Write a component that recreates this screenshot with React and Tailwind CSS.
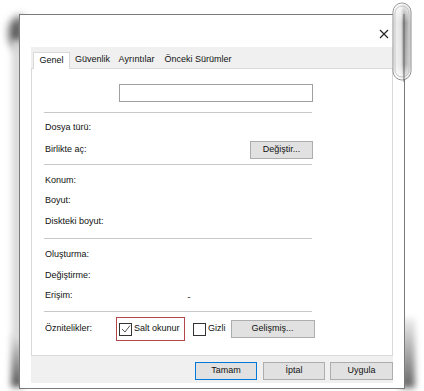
import React from "react";

function Btn({ w, children, primary }) {
  return (
    <div
      className={`h-[18px] flex items-center justify-center bg-[#e1e1e1] border ${
        primary ? "border-[#0078d7]" : "border-[#adadad]"
      }`}
      style={{ width: w }}
    >
      {children}
    </div>
  );
}

function Row({ label, children, h = "h-[20px]", mt = "" }) {
  return (
    <div className={`${h} ${mt} flex items-center pl-[13px] w-[281px]`}>
      <span>{label}</span>
      {children}
    </div>
  );
}

function Sep({ mt }) {
  return <div className={`${mt} ml-[12px] w-[268px] h-px bg-[#c8c8c8]`} />;
}

export default function App() {
  return (
    <div className="relative w-[424px] h-[391px] bg-white overflow-hidden font-['Liberation_Sans',Arial,sans-serif] text-[9px] text-[#111]">
      {/* decorative shadows */}
      <div className="absolute left-[9px] top-[16px] w-[14px] h-[34px] bg-[#555] blur-[4px] rounded-l-full" />
      <div className="absolute left-[12px] top-[40px] w-[10px] h-[300px] bg-[#d8d8d8] blur-[3px]" />
      <div className="absolute left-[11px] top-[335px] w-[12px] h-[52px] bg-gradient-to-b from-[#e0e0e0] to-[#555] blur-[3px]" />
      <div className="absolute left-[400px] top-[318px] w-[15px] h-[70px] bg-gradient-to-b from-[#eeeeee] to-[#666] blur-[3px]" />

      <div className="relative ml-[19px] mt-[14px] w-[386px] h-[375px] border border-[#7a7a7a] bg-white flex flex-col">
        {/* title bar */}
        <div className="h-[32px] flex justify-end items-start pt-[14px] pr-[15px]">
          <svg width="10" height="10" viewBox="0 0 10 10">
            <path d="M1 1 L9 9 M9 1 L1 9" stroke="#222" strokeWidth="1.1" />
          </svg>
        </div>
        {/* client */}
        <div className="px-[11px] pb-[5px] flex-1 flex flex-col">
          <div className="flex-1 bg-[#f0f0f0] flex flex-col">
            {/* tabs */}
            <div className="h-[21px] flex items-end pl-[2px]">
              <div className="relative z-10 mb-[-1px] w-[37px] h-[17px] bg-white border border-b-0 border-[#d9d9d9] flex items-center justify-center pb-[1px]">
                Genel
              </div>
              <div className="w-[45px] h-[16px] flex items-center justify-center">Güvenlik</div>
              <div className="w-[43px] h-[16px] flex items-center justify-center">Ayrıntılar</div>
              <div className="w-[80px] h-[16px] flex items-center justify-center">Önceki Sürümler</div>
            </div>
            {/* panel */}
            <div className="h-[288px] bg-white border border-[#d9d9d9] flex flex-col">
              <div className="mt-[15px] ml-[87px] w-[194px] h-[18px] border border-[#a0a0a0]" />
              <Sep mt="mt-[10px]" />
              <Row label="Dosya türü:" mt="mt-[5px]" />
              <Row label="Birlikte aç:" mt="mt-[2px]">
                <div className="ml-auto">
                  <Btn w={63}>Değiştir...</Btn>
                </div>
              </Row>
              <Sep mt="mt-[4px]" />
              <Row label="Konum:" mt="mt-[6px]" />
              <Row label="Boyut:" />
              <Row label="Diskteki boyut:" mt="mt-[1px]" />
              <Sep mt="mt-[6px]" />
              <Row label="Oluşturma:" mt="mt-[6px]" />
              <Row label="Değiştirme:" mt="mt-[1px]" />
              <Row label="Erişim:">
                <span className="ml-[115px] mt-[4px]">-</span>
              </Row>
              <Sep mt="mt-[5px]" />
              <div className="mt-[5px] h-[24px] flex items-center pl-[13px]">
                <span className="w-[71px]">Öznitelikler:</span>
                <div className="w-[69px] h-[24px] border border-[#b0474a] flex items-center pl-[2px] gap-[2px]">
                  <div className="w-[13px] h-[13px] border border-[#333] bg-white flex items-center justify-center">
                    <svg width="10" height="10" viewBox="0 0 10 10">
                      <path d="M1 5 L4 8 L9 1.5" fill="none" stroke="#555" strokeWidth="1" />
                    </svg>
                  </div>
                  <span>Salt okunur</span>
                </div>
                <div className="ml-[8px] w-[13px] h-[13px] border border-[#333] bg-white" />
                <span className="ml-[2px]">Gizli</span>
                <div className="ml-[5px]">
                  <Btn w={84}>Gelişmiş...</Btn>
                </div>
              </div>
            </div>
            {/* bottom buttons */}
            <div className="flex justify-end pt-[6px]">
              <Btn w={62} primary>Tamam</Btn>
              <div className="ml-[6px]"><Btn w={62}>İptal</Btn></div>
              <div className="ml-[5px]"><Btn w={63}>Uygula</Btn></div>
            </div>
          </div>
        </div>
      </div>

      {/* paper clip */}
      <svg className="absolute left-[392px] top-[2px]" width="21" height="80" viewBox="0 0 21 80">
        <defs>
          <linearGradient id="cg" x1="0" y1="0" x2="1" y2="0">
            <stop offset="0" stopColor="#f4f4f4" />
            <stop offset="0.45" stopColor="#e0e0e0" />
            <stop offset="0.6" stopColor="#8a8a8a" />
            <stop offset="1" stopColor="#dcdcdc" />
          </linearGradient>
          <linearGradient id="fade" x1="0" y1="0" x2="0" y2="1">
            <stop offset="0" stopColor="#fff" stopOpacity="0.9" />
            <stop offset="0.25" stopColor="#fff" stopOpacity="0" />
            <stop offset="0.8" stopColor="#fff" stopOpacity="0.2" />
            <stop offset="1" stopColor="#fff" stopOpacity="0.9" />
          </linearGradient>
        </defs>
        <rect x="1" y="1" width="18" height="77" rx="9" fill="url(#cg)" stroke="#8f8f8f" strokeWidth="1" />
        <rect x="1.5" y="1.5" width="17" height="76" rx="8.5" fill="url(#fade)" />
        <rect x="3" y="4" width="14" height="71" rx="7" fill="none" stroke="#c4c4c4" strokeWidth="1" />
        <line x1="12" y1="12" x2="12" y2="80" stroke="#6a6a6a" strokeWidth="1" />
      </svg>
    </div>
  );
}
